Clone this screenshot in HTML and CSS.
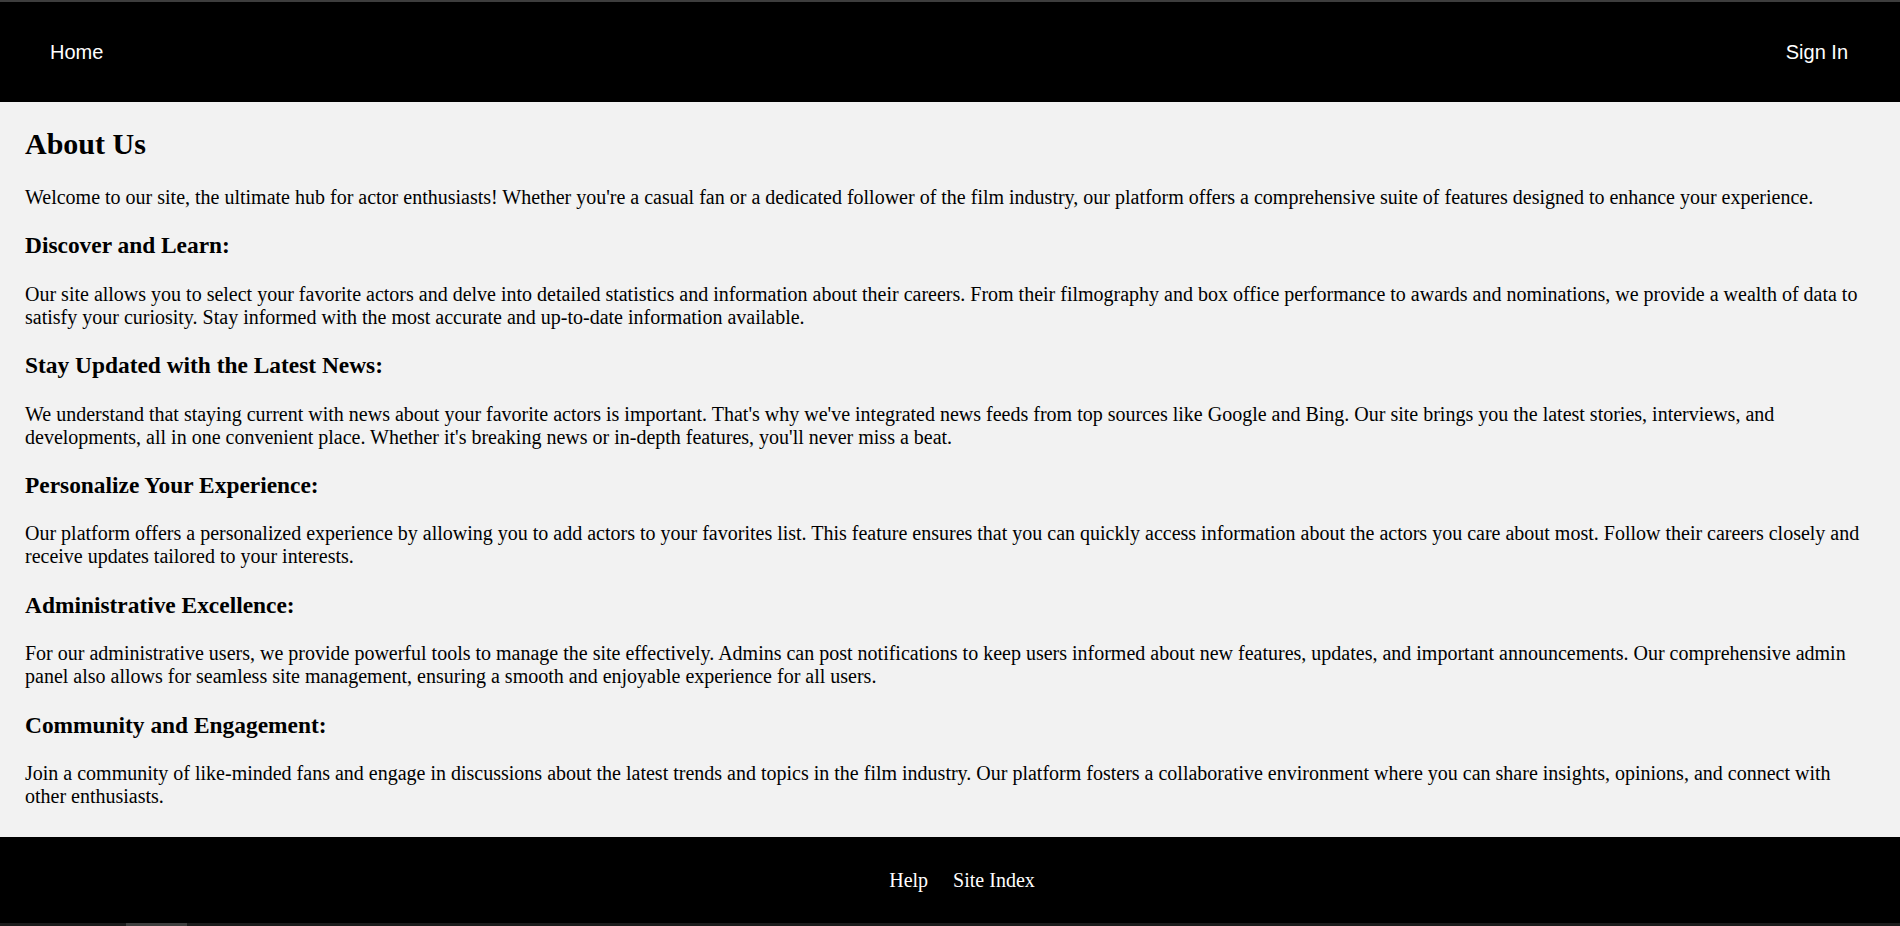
FILE: index.html
```html
<!DOCTYPE html>
<html lang="en">
<head>
<meta charset="utf-8">
<title>About Us</title>
<link rel="stylesheet" href="styles.css">
</head>
<body>
<header class="topbar">
  <a class="nav-link" href="#">Home</a>
  <a class="nav-link" href="#">Sign In</a>
</header>
<main class="content">
  <h2 class="title">About Us</h2>
  <p>Welcome to our site, the ultimate hub for actor enthusiasts! Whether you're a casual fan or a dedicated follower of the film industry, our platform offers a comprehensive suite of features designed to enhance your experience.</p>
  <h3 class="section">Discover and Learn:</h3>
  <p>Our site allows you to select your favorite actors and delve into detailed statistics and information about their careers. From their filmography and box office performance to awards and nominations, we provide a wealth of data to satisfy your curiosity. Stay informed with the most accurate and up-to-date information available.</p>
  <h3 class="section">Stay Updated with the Latest News:</h3>
  <p>We understand that staying current with news about your favorite actors is important. That's why we've integrated news feeds from top sources like Google and Bing. Our site brings you the latest stories, interviews, and developments, all in one convenient place. Whether it's breaking news or in-depth features, you'll never miss a beat.</p>
  <h3 class="section">Personalize Your Experience:</h3>
  <p>Our platform offers a personalized experience by allowing you to add actors to your favorites list. This feature ensures that you can quickly access information about the actors you care about most. Follow their careers closely and receive updates tailored to your interests.</p>
  <h3 class="section">Administrative Excellence:</h3>
  <p>For our administrative users, we provide powerful tools to manage the site effectively. Admins can post notifications to keep users informed about new features, updates, and important announcements. Our comprehensive admin panel also allows for seamless site management, ensuring a smooth and enjoyable experience for all users.</p>
  <h3 class="section">Community and Engagement:</h3>
  <p>Join a community of like-minded fans and engage in discussions about the latest trends and topics in the film industry. Our platform fosters a collaborative environment where you can share insights, opinions, and connect with other enthusiasts.</p>
</main>
<footer class="footer">
  <p class="footer-links"><a class="footer-link" href="#">Help</a> <a class="footer-link" href="#">Site Index</a></p>
</footer>
<div class="hscroll"><div class="hscroll-thumb"></div></div>
</body>
</html>
```

FILE: styles.css
```css
html, body {
  margin: 0;
  padding: 0;
  overflow: hidden;
}
body {
  background: #f2f2f2;
  font-family: "Liberation Serif", "Times New Roman", serif;
  font-size: 20px;
  color: #000;
}
.topbar {
  display: flex;
  justify-content: space-between;
  align-items: center;
  height: 100px;
  padding: 0 52px 0 50px;
  background: #000;
  border-top: 2px solid #3d3d3d;
}
.nav-link {
  font-family: "Liberation Sans", Arial, sans-serif;
  font-size: 20px;
  color: #fff;
  text-decoration: none;
}
.content {
  padding: 0 25px 9px 25px;
}
.title {
  font-size: 30px;
  font-weight: bold;
  margin: 25px 0;
}
.content p {
  margin: 20px 0;
}
.section {
  font-size: 23.4px;
  font-weight: bold;
  margin: 23.4px 0;
}
.footer {
  background: #000;
  padding: 12px 0 11px 24px;
  text-align: center;
}
.footer-links {
  margin: 20px 0;
}
.footer-link {
  color: #fff;
  text-decoration: none;
  margin: 0 10px;
}
.hscroll {
  height: 3px;
  background: #1c1c1c;
  display: flex;
}
.hscroll-thumb {
  margin-left: 126px;
  width: 61px;
  background: #3f3f3f;
}
```
